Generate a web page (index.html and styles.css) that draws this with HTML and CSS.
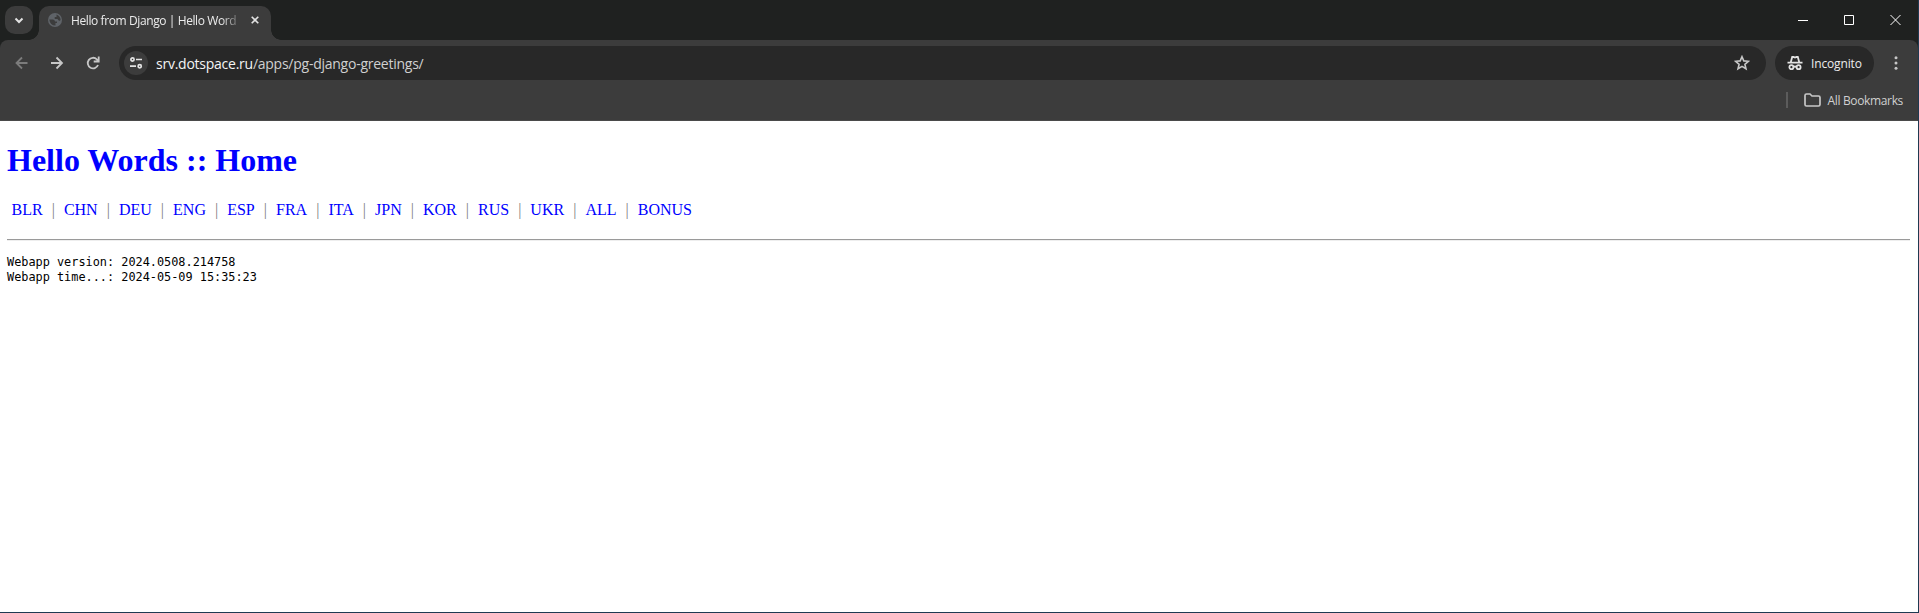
FILE: index.html
```html
<!DOCTYPE html>
<html lang="en">
<head>
<meta charset="utf-8">
<title>Hello from Django | Hello Words</title>
<link rel="stylesheet" href="styles.css">
</head>
<body>
<div class="window">
  <header class="tabstrip">
    <div class="tab-search"><svg width="28" height="28" viewBox="0 0 28 28"><path d="M10.500 12.500 14 16l3.500-3.500" fill="none" stroke="#e3e3e3" stroke-width="2"/></svg></div>
    <div class="tab">
      <svg class="globe" width="14" height="14" viewBox="0 0 14 14"><circle cx="7" cy="7" r="7" fill="#5f6368"/><path d="M1.300 6.500h3.500q2 0 2.200 2h2v1.500H7.500v2.500Q2 12.500 1.300 6.500zM8.500 1.500Q12.500 3 12.600 7q-1 1.500-2.100.2L9.500 6H6.700V4h1.800z" fill="#3c3c3c"/></svg>
      <span class="tab-title">Hello from Django | Hello Word</span>
      <svg class="tab-close" width="8" height="8" viewBox="0 0 8 8"><path d="M.7.7l6.600 6.600M7.300.7.7 7.300" stroke="#e3e3e3" stroke-width="1.600"/></svg>
    </div>
    <svg class="controls" width="104" height="12" viewBox="0 0 104 12" fill="none" stroke="#fff"><path d="M0 6.500h10M46.500 1.500h9v9h-9zM92.500 1l10 10M102.500 1l-10 10"/></svg>
  </header>
  <div class="toolbar">
    <div class="nav-row">
      <svg class="nav-icons" width="88" height="16" viewBox="0 0 88 16" fill="none" stroke-width="1.800"><path d="M12.500 8H1.500M7 2.500 1.500 8 7 13.500" stroke="#7c7c7c"/><path d="M36 8h11M41.500 2.500 47 8l-5.500 5.500" stroke="#c7c7c7"/><path d="M83 10a5.300 5.300 0 1 1-1.200-5.700L83.500 6M83.700 1.500v5h-5" stroke="#c7c7c7"/></svg>
      <div class="omnibox">
        <div class="site-info"><svg width="14" height="12" viewBox="0 0 14 12" fill="none" stroke="#e3e3e3" stroke-width="1.700"><circle cx="3.500" cy="2.500" r="1.600"/><path d="M7 2.500h6M1 9.200h6"/><circle cx="10.700" cy="9.200" r="1.600"/></svg></div>
        <span class="url"><b>srv.dotspace.ru</b>/apps/pg-django-greetings/</span>
        <svg class="star" width="16" height="16" viewBox="0 0 16 16"><path d="M8 1.700l1.800 4.200 4.600.4-3.500 3 1.100 4.500L8 11.400l-4 2.400 1.100-4.500-3.500-3 4.600-.4z" fill="none" stroke="#c7c7c7" stroke-width="1.600"/></svg>
      </div>
      <div class="incognito"><svg width="16" height="16" viewBox="0 0 16 16" fill="none" stroke="#e3e3e3" stroke-width="1.800"><path d="M.5 7.700h15M3.700 7.500 5.200 2h1.300l1.500.6L9.500 2h1.300l1.500 5.500M6.500 12q1.500-1 3 0"/><circle cx="4.400" cy="12.200" r="2"/><circle cx="11.600" cy="12.200" r="2"/></svg><span>Incognito</span></div>
      <svg class="menu" width="4" height="14" viewBox="0 0 4 14" fill="#c7c7c7"><circle cx="2" cy="1.700" r="1.500"/><circle cx="2" cy="7" r="1.500"/><circle cx="2" cy="12.300" r="1.500"/></svg>
    </div>
    <div class="bookmarks">
      <i class="divider"></i>
      <svg width="17" height="14" viewBox="0 0 17 14"><path d="M1 2.500Q1 1 2.500 1H6l2 2h6.500Q16 3 16 4.500v7q0 1.500-1.500 1.500h-12Q1 13 1 11.500z" fill="none" stroke="#c7c7c7" stroke-width="1.700"/></svg>
      <span class="all-bookmarks">All Bookmarks</span>
    </div>
  </div>
  <main class="page">
    <h1>Hello Words :: Home</h1>
    <nav class="links"><a>BLR</a><a>CHN</a><a>DEU</a><a>ENG</a><a>ESP</a><a>FRA</a><a>ITA</a><a>JPN</a><a>KOR</a><a>RUS</a><a>UKR</a><a>ALL</a><a>BONUS</a></nav>
    <hr>
    <pre>Webapp version: 2024.0508.214758
Webapp time...: 2024-05-09 15:35:23</pre>
  </main>
</div>
</body>
</html>
```
FILE: styles.css
```css
* { box-sizing: border-box; }
body { margin: 0; overflow: hidden; background: #fff; }
svg { display: block; flex: none; }
.window { height: 613px; display: flex; flex-direction: column; border-right: 1px solid #1f3a52; border-bottom: 1px solid #1f3a52; background: #fff; }
.tabstrip, .toolbar { font-family: "Open Sans", "Noto Sans", sans-serif; font-size: 12px; color: #ececec; white-space: nowrap; }
.tabstrip { height: 40px; flex: none; display: flex; background: #1f2120; padding: 6px 20px 0 5px; }
.tab-search { width: 28px; height: 28px; border-radius: 10px; background: #3c3c3c; }
.tab { position: relative; width: 232px; height: 34px; margin-left: 6px; padding: 0 12px 6px 9px; display: flex; align-items: center; background: #3c3c3c; border-radius: 10px 10px 0 0; }
.tab::before, .tab::after { content: ""; position: absolute; bottom: 0; width: 10px; height: 10px; }
.tab::before { left: -10px; background: radial-gradient(circle at 0 0, transparent 9.5px, #3c3c3c 10px); }
.tab::after { right: -10px; background: radial-gradient(circle at 100% 0, transparent 9.5px, #3c3c3c 10px); }
.tab-title { width: 172px; margin: 1px 0 0 9px; letter-spacing: -0.4px; line-height: 18px; mask-image: linear-gradient(to right, #000 150px, transparent 172px); }
.tab-close { margin-left: auto; }
.controls { margin: 8px -4px 0 auto; }
.toolbar { height: 81px; flex: none; background: #1f2120; position: relative; z-index: 0; }
.toolbar::before { content: ""; position: absolute; inset: 0; z-index: -1; background: #3c3c3c; border-radius: 8px 8px 0 0; border-bottom: 1px solid #4a4a4a; }
.nav-row { display: flex; align-items: center; padding: 6px 0 0 15px; height: 40px; }
.omnibox { width: 1647px; height: 34px; margin-left: 16px; padding: 0 16px 0 5px; border-radius: 17px; background: #282828; display: flex; align-items: center; }
.site-info { width: 24px; height: 24px; border-radius: 50%; background: #3c3c3c; display: grid; place-items: center; }
.url { margin: 1px 0 0 8px; font-size: 14px; line-height: 20px; letter-spacing: -0.25px; color: #d0d0d0; }
.url b { font-weight: 400; color: #f4f4f4; }
.star { margin-left: auto; }
.incognito { width: 99px; height: 34px; margin-left: 9px; padding-left: 12px; border-radius: 17px; background: #282828; display: flex; align-items: center; gap: 8px; letter-spacing: -0.15px; }
.menu { margin-left: 20px; }
.bookmarks { height: 40px; display: flex; justify-content: flex-end; align-items: center; padding-right: 15px; color: #d0d0d0; }
.divider { width: 2px; height: 16px; margin-right: 16px; background: #5c5c5c; }
.all-bookmarks { margin-left: 7px; letter-spacing: -0.35px; }
.page { padding: 0 8px 0 7px; font: 16px/18px "Liberation Serif", "Times New Roman", serif; color: #000; }
.page h1 { margin: 21px 0 22px; font-size: 32px; line-height: 37px; color: #00f; }
.links { padding-left: 4.5px; display: flex; color: #00f; }
.links a + a::before { content: "|"; display: inline-block; width: 21.25px; text-align: center; color: #808080; }
.page hr { margin: 20px 0 14px; border: 0; height: 2px; background: linear-gradient(#9a9a9a 50%, #eee 50%); }
.page pre { margin: 0; font: 11.87px/15px "DejaVu Sans Mono", monospace; }
```
